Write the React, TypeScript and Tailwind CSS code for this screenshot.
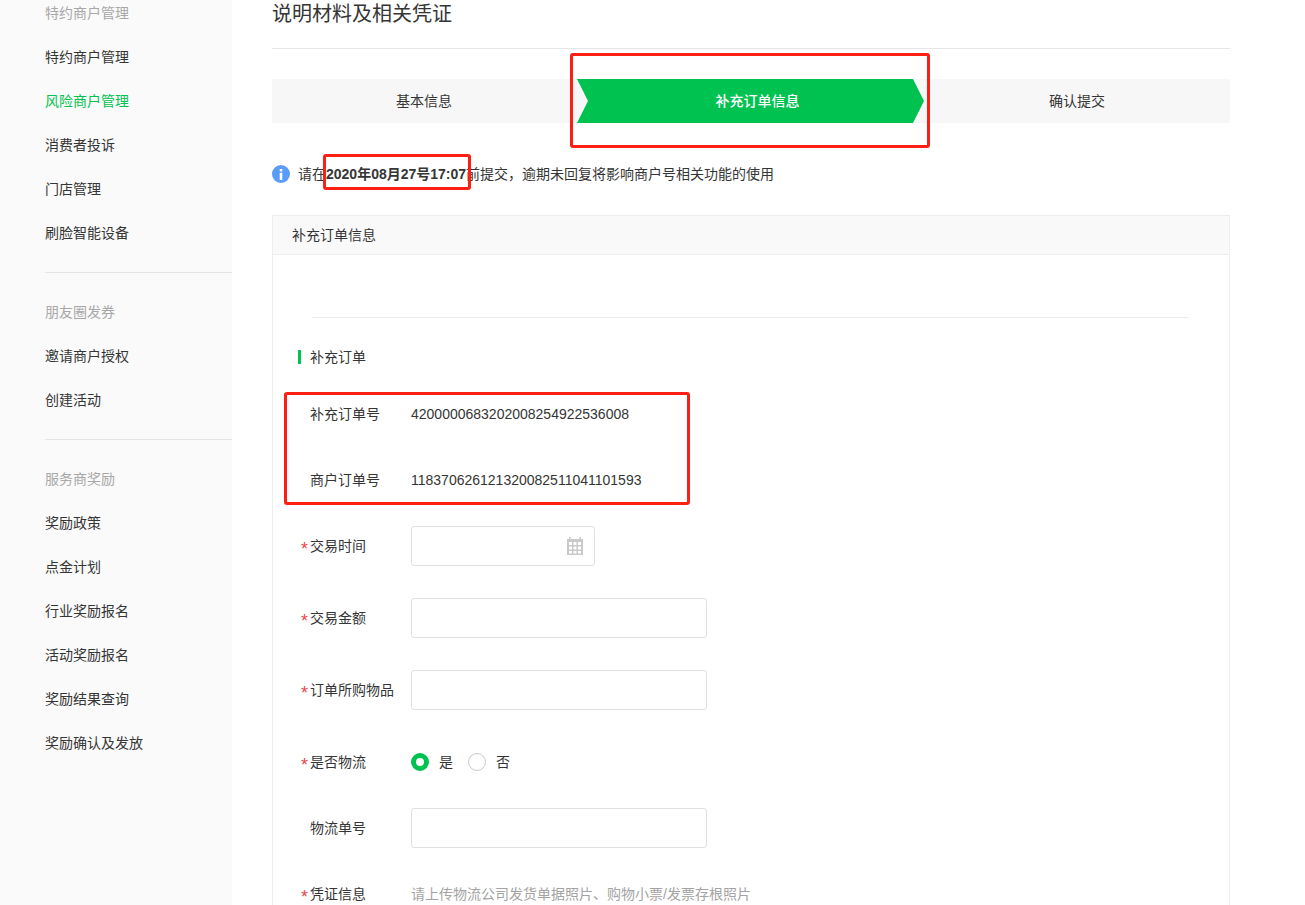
const sideGroups = [
  { title: "特约商户管理", items: ["特约商户管理", "风险商户管理", "消费者投诉", "门店管理", "刷脸智能设备"] },
  { title: "朋友圈发券", items: ["邀请商户授权", "创建活动"] },
  { title: "服务商奖励", items: ["奖励政策", "点金计划", "行业奖励报名", "活动奖励报名", "奖励结果查询", "奖励确认及发放"] },
];

function Sidebar() {
  return (
    <aside className="w-[232px] shrink-0 bg-[#fafafa] pl-[45px] overflow-hidden">
      <div className="-mt-[9px]">
        {sideGroups.map((g, i) => (
          <div key={g.title}>
            {i > 0 && <div className="h-px bg-[#e5e5e5] my-[17px]" />}
            <div className="h-11 leading-[44px] text-[#a8a8a8]">{g.title}</div>
            {g.items.map((item) => (
              <div key={item} className={`h-11 leading-[44px] ${item === "风险商户管理" ? "text-[#00c250]" : "text-[#353535]"}`}>
                {item}
              </div>
            ))}
          </div>
        ))}
      </div>
    </aside>
  );
}

function Row({ label, required, className, children }: { label: string; required?: boolean; className?: string; children?: React.ReactNode }) {
  return (
    <div className={`flex items-center h-10 pl-[37px] ${className ?? ""}`}>
      <div className="relative w-[101px] shrink-0 text-[#353535]">
        {required && <span className="absolute -left-[9px] top-[4px] text-[18px] leading-none text-[#e5484d]">*</span>}
        {label}
      </div>
      {children}
    </div>
  );
}

function TextInput({ className }: { className?: string }) {
  return <div className={`h-10 w-[296px] border border-[#e0e0e0] rounded-[3px] bg-white ${className ?? ""}`} />;
}

function CalendarIcon() {
  return (
    <svg width="18" height="18" viewBox="0 0 18 18" className="block">
      <path fill="#c9c9c9" d="M1 2h2V0h1.5v2h9V0H15v2h2v16H1z" />
      <g fill="#fff">
        <rect x="3" y="5" width="3" height="3" />
        <rect x="7.5" y="5" width="3" height="3" />
        <rect x="12" y="5" width="3" height="3" />
        <rect x="3" y="9.5" width="3" height="3" />
        <rect x="7.5" y="9.5" width="3" height="3" />
        <rect x="12" y="9.5" width="3" height="3" />
        <rect x="3" y="14" width="3" height="2.5" />
        <rect x="7.5" y="14" width="3" height="2.5" />
        <rect x="12" y="14" width="3" height="2.5" />
      </g>
    </svg>
  );
}

function Steps() {
  return (
    <div className="mt-[30px] flex h-11 bg-[#f7f7f7] text-[#353535]">
      <div className="w-[304px] flex items-center justify-center">基本信息</div>
      <div className="ml-px w-[347px] pl-[14px] flex items-center justify-center bg-[#00c250] text-white font-medium [clip-path:polygon(0_0,336px_0,100%_50%,336px_100%,0_100%,11px_50%)]">
        补充订单信息
      </div>
      <div className="flex-1 flex items-center justify-center">确认提交</div>
    </div>
  );
}

export default function App() {
  return (
    <div className="relative flex h-[905px] overflow-hidden bg-white text-[14px] font-['Liberation_Sans','Noto_Sans_CJK_SC',sans-serif]">
      <Sidebar />
      <main className="ml-10 w-[958px] shrink-0">
        <div className="h-[49px] border-b border-[#e5e5e5]">
          <h1 className="text-[20px] leading-[28px] text-[#353535]">说明材料及相关凭证</h1>
        </div>
        <Steps />

        <div className="mt-[41px] h-5 flex items-center text-[#353535]">
          <span className="w-[18px] h-[18px] rounded-full bg-[#5a9cf8] flex items-center justify-center mr-2">
            <svg width="4" height="11" viewBox="0 0 4 11">
              <rect x="0.7" y="0" width="2.6" height="2.4" fill="#fff" />
              <rect x="0.7" y="3.8" width="2.6" height="7.2" fill="#fff" />
            </svg>
          </span>
          请在<b className="font-bold">2020年08月27号17:07</b>前提交，逾期未回复将影响商户号相关功能的使用
        </div>

        <section className="mt-[31px] border border-[#eeeeee]">
          <div className="h-[39px] bg-[#f9f9f9] border-b border-[#eeeeee] pl-[19px] flex items-center text-[#353535]">补充订单信息</div>
          <div className="pb-10">
            <div className="mt-[62px] ml-[39px] mr-10 h-px bg-[#ececec]" />
            <div className="mt-[29px] h-5 pl-[25px] flex items-center text-[#353535]">
              <span className="w-[3px] h-[14px] bg-[#00c250] mr-[9px]" />
              补充订单
            </div>

            <Row label="补充订单号" className="mt-[27px]">
              <span className="text-[#353535]">4200000683202008254922536008</span>
            </Row>
            <Row label="商户订单号" className="mt-[26px]">
              <span className="text-[#353535]">118370626121320082511041101593</span>
            </Row>
            <Row label="交易时间" required className="mt-[26px]">
              <div className="h-10 w-[184px] border border-[#e0e0e0] rounded-[3px] flex items-center justify-end pr-[10px]">
                <CalendarIcon />
              </div>
            </Row>
            <Row label="交易金额" required className="mt-8">
              <TextInput />
            </Row>
            <Row label="订单所购物品" required className="mt-8">
              <TextInput />
            </Row>
            <Row label="是否物流" required className="mt-8">
              <span className="w-[18px] h-[18px] rounded-full border-[5px] border-[#00c250] bg-white mr-[10px]" />
              <span className="text-[#353535] mr-[15px]">是</span>
              <span className="w-[18px] h-[18px] rounded-full border border-[#c9c9c9] bg-white mr-[10px]" />
              <span className="text-[#353535]">否</span>
            </Row>
            <Row label="物流单号" className="mt-[26px]">
              <TextInput />
            </Row>
            <Row label="凭证信息" required className="mt-[26px]">
              <span className="text-[#a3a3a3]">请上传物流公司发货单据照片、购物小票/发票存根照片</span>
            </Row>
          </div>
        </section>
      </main>

      {/* red annotation boxes drawn over the page */}
      <div className="absolute left-[570px] top-[53px] w-[360px] h-[95px] border-[3px] border-[#fb1f14] rounded-[3px]" />
      <div className="absolute left-[323px] top-[154px] w-[148px] h-[36px] border-[3px] border-[#fb1f14] rounded-[3px]" />
      <div className="absolute left-[284px] top-[392px] w-[406px] h-[113px] border-[3px] border-[#fb1f14] rounded-[3px]" />
    </div>
  );
}
